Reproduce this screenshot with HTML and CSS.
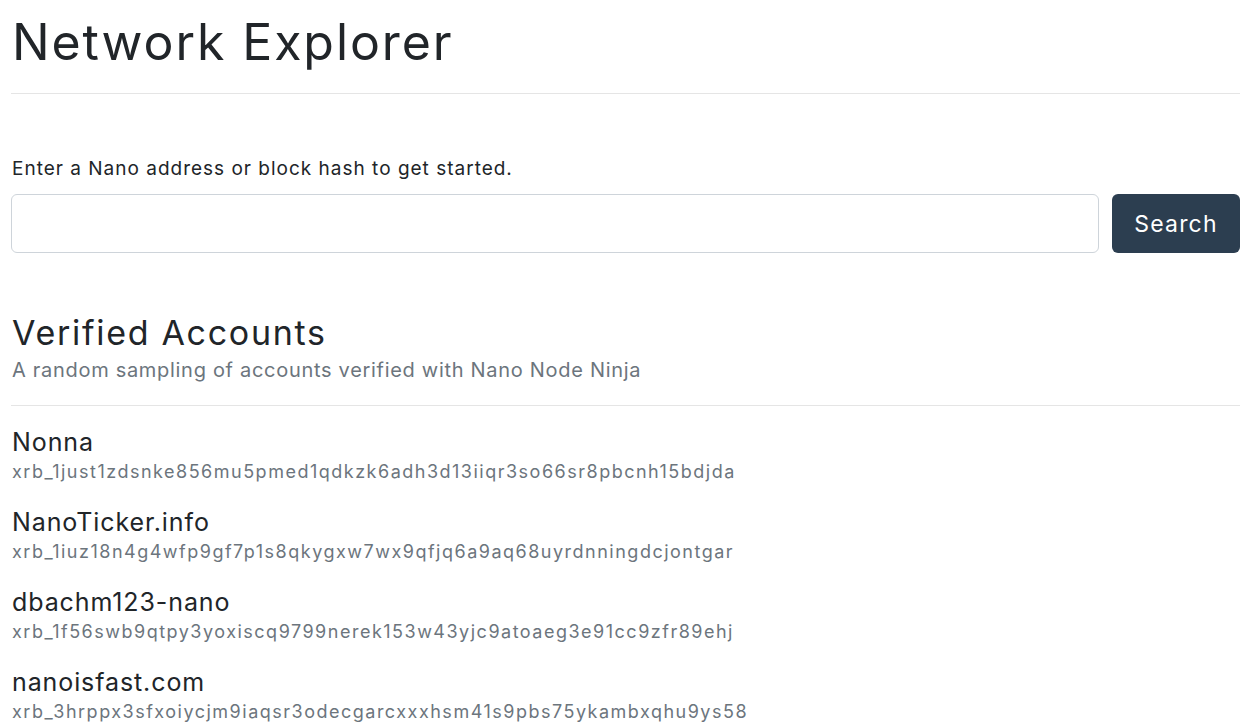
FILE: index.html
```html
<!DOCTYPE html>
<html lang="en">
<head>
    <meta charset="UTF-8">
    <meta name="viewport" content="width=device-width, initial-scale=1.0">
    <title>Network Explorer</title>
    <link rel="stylesheet" href="styles.css">
</head>
<body>
    <div class="container">
        <h1 class="title">Network Explorer</h1>
        <hr class="title-rule">

        <p class="lead-in">Enter a Nano address or block hash to get started.</p>
        <form class="search" onsubmit="return false">
            <input type="text" class="search-input">
            <button class="btn">Search</button>
        </form>

        <h2 class="section-title">Verified Accounts</h2>
        <p class="section-sub">A random sampling of accounts verified with Nano Node Ninja</p>
        <hr>

        <div class="accounts">
            <div class="account">
                <div class="account-name">Nonna</div>
                <div class="account-addr">xrb_1just1zdsnke856mu5pmed1qdkzk6adh3d13iiqr3so66sr8pbcnh15bdjda</div>
            </div>
            <div class="account">
                <div class="account-name">NanoTicker.info</div>
                <div class="account-addr">xrb_1iuz18n4g4wfp9gf7p1s8qkygxw7wx9qfjq6a9aq68uyrdnningdcjontgar</div>
            </div>
            <div class="account">
                <div class="account-name">dbachm123-nano</div>
                <div class="account-addr">xrb_1f56swb9qtpy3yoxiscq9799nerek153w43yjc9atoaeg3e91cc9zfr89ehj</div>
            </div>
            <div class="account">
                <div class="account-name">nanoisfast.com</div>
                <div class="account-addr">xrb_3hrppx3sfxoiycjm9iaqsr3odecgarcxxxhsm41s9pbs75ykambxqhu9ys58</div>
            </div>
        </div>
    </div>
</body>
</html>
```

FILE: styles.css
```css
body {
    margin: 0;
    padding: 0;
    font-family: 'Inter', 'Open Sans', sans-serif;
    color: #212529;
    background: #fff;
    overflow: hidden;
}
.container {
    padding: 0 9px 0 11px;
}
.title {
    font-size: 50px;
    font-weight: 400;
    letter-spacing: 1.9px;
    line-height: 60px;
    margin: 12px 0 0 1px;
}
hr {
    border: none;
    border-top: 1px solid rgba(0, 0, 0, 0.1);
    margin: 0;
}
.title-rule {
    margin-top: 21px;
}
.lead-in {
    font-size: 19px;
    letter-spacing: 1px;
    line-height: 24px;
    margin: 63px 0 13px 1px;
}
.search {
    display: flex;
    gap: 13px;
}
.search-input {
    flex: 1;
    height: 59px;
    box-sizing: border-box;
    border: 1px solid #ced4da;
    border-radius: 6px;
    font-size: 18px;
    padding: 0 12px;
}
.btn {
    width: 128px;
    height: 59px;
    font-family: inherit;
    font-size: 23px;
    letter-spacing: 1.2px;
    color: #fff;
    background-color: #2c3e50;
    border: none;
    border-radius: 6px;
    cursor: pointer;
}
.section-title {
    font-size: 34px;
    font-weight: 400;
    letter-spacing: 1.7px;
    line-height: 40px;
    margin: 60px 0 0 1px;
}
.section-sub {
    font-size: 20px;
    letter-spacing: 0.7px;
    line-height: 24px;
    color: #6c757d;
    margin: 5px 0 23px 1px;
}
.accounts {
    padding: 21px 0 0 1px;
}
.account {
    margin-bottom: 23px;
}
.account-name {
    font-size: 25px;
    letter-spacing: 0.9px;
    line-height: 30px;
    margin-bottom: 3px;
}
.account-addr {
    font-size: 18px;
    letter-spacing: 1.5px;
    line-height: 24px;
    color: #6c757d;
}
```
